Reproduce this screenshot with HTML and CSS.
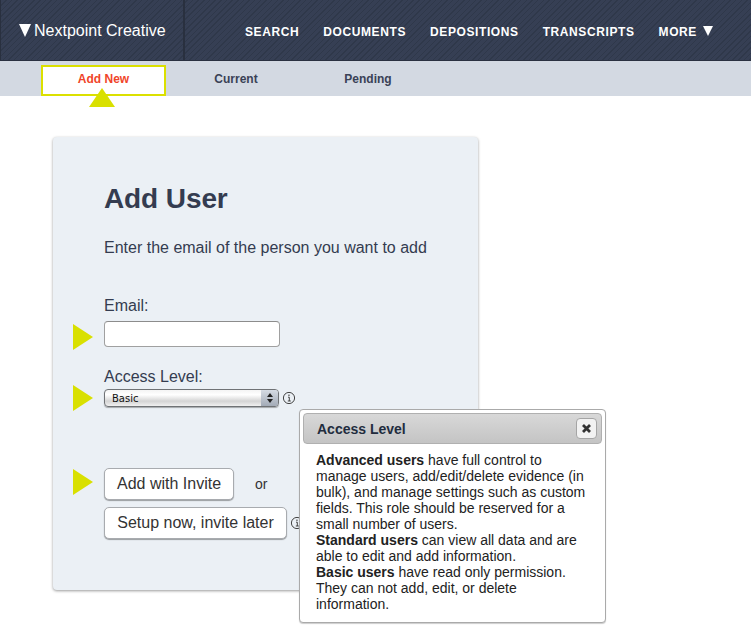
FILE: index.html
```html
<!DOCTYPE html>
<html lang="en">
<head>
<meta charset="utf-8">
<title>Add User</title>
<link rel="stylesheet" href="styles.css">
</head>
<body>
<header class="topbar">
  <div class="brand"><span class="brand-arrow"></span><span>Nextpoint Creative</span></div>
  <nav class="mainnav">
    <a>SEARCH</a><a>DOCUMENTS</a><a>DEPOSITIONS</a><a>TRANSCRIPTS</a><a class="more">MORE <span class="more-arrow"></span></a>
  </nav>
</header>
<div class="subbar">
  <a class="tab tab-active"><span class="tab-label">Add New</span><span class="tab-pointer"></span></a>
  <a class="tab tab-current"><span class="tab-label">Current</span></a>
  <a class="tab tab-pending"><span class="tab-label">Pending</span></a>
</div>
<main class="content">
  <section class="card">
    <h1 class="title">Add User</h1>
    <p class="intro">Enter the email of the person you want to add</p>
    <div class="field field-email">
      <span class="marker"></span>
      <label class="label">Email:</label>
      <div class="input"></div>
    </div>
    <div class="field field-access">
      <span class="marker marker-access"></span>
      <label class="label">Access Level:</label>
      <div class="select-row">
        <div class="select"><span class="select-text">Basic</span>
          <span class="stepper"><svg width="8" height="12" viewBox="0 0 8 12"><path d="M4 1 7 5H1zM4 11 1 7h6z" fill="#222"/></svg></span>
        </div>
        <svg class="info" width="14" height="14" viewBox="0 0 14 14"><circle cx="7" cy="7" r="5.6" fill="none" stroke="#444" stroke-width="1"/><path d="M6 6.2h1.3V10M5.8 10h3" fill="none" stroke="#444"/><rect x="6.3" y="3.6" width="1.3" height="1.3" fill="#444"/></svg>
      </div>
    </div>
    <div class="actions">
      <span class="marker marker-actions"></span>
      <div class="action-row"><button class="btn btn-invite">Add with Invite</button><span class="or">or</span></div>
      <div class="action-row"><button class="btn btn-later">Setup now, invite later</button>
        <svg class="info info-later" width="14" height="14" viewBox="0 0 14 14"><circle cx="7" cy="7" r="5.6" fill="none" stroke="#444" stroke-width="1"/><path d="M6 6.2h1.3V10M5.8 10h3" fill="none" stroke="#444"/><rect x="6.3" y="3.6" width="1.3" height="1.3" fill="#444"/></svg>
      </div>
    </div>
  </section>
  <aside class="popup">
    <div class="popup-head"><span>Access Level</span>
      <span class="close"><svg width="11" height="11" viewBox="0 0 11 11"><path d="M2 2l7 7M9 2 2 9" stroke="#333" stroke-width="2.8"/></svg></span>
    </div>
    <div class="popup-body">
      <b>Advanced users</b> have full control to manage users, add/edit/delete evidence (in bulk), and manage settings such as custom fields. This role should be reserved for a small number of users.<br>
      <b>Standard users</b> can view all data and are able to edit and add information.<br>
      <b>Basic users</b> have read only permission. They can not add, edit, or delete information.
    </div>
  </aside>
</main>
</body>
</html>
```
FILE: styles.css
```css
* { box-sizing: border-box; }
html, body { margin: 0; padding: 0; }
body {
  width: 751px;
  height: 643px;
  overflow: hidden;
  background: #fff;
  font-family: "Liberation Sans", Arial, sans-serif;
  color: #343c50;
}
.topbar {
  height: 61px;
  display: flex;
  background-color: #343d51;
  background-image: repeating-linear-gradient(135deg, #2f384a 0 1px, #363f54 1px 4px);
  border-bottom: 1px solid #2a3140;
}
.brand {
  width: 185px;
  display: flex;
  align-items: center;
  padding: 2px 0 0 18px;
  border-left: 1px solid #29303f;
  border-right: 2px solid #29303f;
  color: #fff;
  font-size: 16px;
  gap: 3px;
}
.brand-arrow {
  width: 0;
  height: 0;
  margin-top: -1px;
  border-left: 6.5px solid transparent;
  border-right: 6.5px solid transparent;
  border-top: 13px solid #fff;
}
.mainnav {
  display: flex;
  align-items: center;
  gap: 24px;
  padding: 4px 0 0 60px;
  color: #fff;
  font-size: 12px;
  font-weight: bold;
  letter-spacing: 0.6px;
}
.more-arrow {
  display: inline-block;
  width: 0;
  height: 0;
  margin-left: 2px;
  border-left: 5px solid transparent;
  border-right: 5px solid transparent;
  border-top: 10px solid #fff;
}
.subbar {
  height: 35px;
  background: #d3d9e2;
  display: flex;
  align-items: flex-start;
  padding: 4px 0 0 41px;
  font-size: 12px;
  font-weight: bold;
}
.tab {
  position: relative;
  height: 31px;
  display: flex;
  align-items: center;
  justify-content: center;
  padding-bottom: 4px;
  color: #3a4256;
}
.tab-active {
  width: 125px;
  background: #fff;
  border: 2px solid #dbe000;
  color: #f0442a;
}
.tab-current { width: 140px; }
.tab-pending { width: 124px; }
.tab-pointer {
  position: absolute;
  left: 46px;
  top: 21px;
  width: 0;
  height: 0;
  border-left: 13.5px solid transparent;
  border-right: 13.5px solid transparent;
  border-bottom: 19px solid #d9e000;
}
.content {
  position: relative;
  padding: 41px 0 0 53px;
}
.card {
  width: 425px;
  height: 453px;
  background: #ebf0f5;
  border-radius: 4px;
  box-shadow: 0 1px 3px rgba(0, 0, 0, 0.4);
  padding: 45px 0 0 51px;
}
.title {
  margin: 0;
  font-size: 28px;
  line-height: 34px;
  font-weight: bold;
  color: #343c50;
  letter-spacing: -0.1px;
}
.intro {
  margin: 22px 0 0;
  font-size: 16px;
  line-height: 20px;
  color: #343c50;
}
.field { position: relative; }
.field-email { margin-top: 38px; }
.field-access { margin-top: 20px; }
.label {
  display: block;
  font-size: 16px;
  line-height: 20px;
  color: #343c50;
}
.input {
  width: 176px;
  height: 26px;
  margin-top: 5px;
  background: #fff;
  border: 1px solid #a0a0a0;
  border-top-color: #8c8c8c;
  border-radius: 4px;
}
.marker {
  position: absolute;
  left: -31px;
  top: 28px;
  width: 0;
  height: 0;
  border-top: 13px solid transparent;
  border-bottom: 13px solid transparent;
  border-left: 20px solid #d9e000;
}
.marker-access { top: 18px; }
.marker-actions { top: 1px; }
.select-row {
  display: flex;
  align-items: center;
  gap: 3px;
  margin-top: 2px;
}
.select {
  width: 175px;
  height: 18px;
  display: flex;
  justify-content: space-between;
  align-items: center;
  border: 1px solid #6f7275;
  border-radius: 4px;
  background: linear-gradient(#f4f4f4, #fff 30%, #d4d4d4 70%, #f0f0f0);
  overflow: hidden;
  box-shadow: 0 1px 1px rgba(0, 0, 0, 0.3);
}
.select-text {
  padding-left: 7px;
  font-family: "DejaVu Sans", sans-serif;
  font-size: 10px;
  color: #111;
}
.stepper {
  width: 17px;
  height: 100%;
  display: flex;
  align-items: center;
  justify-content: center;
  background: linear-gradient(#d5dbe3, #a3abb7);
}
.actions {
  position: relative;
  margin-top: 61px;
  display: flex;
  flex-direction: column;
  gap: 7px;
}
.action-row { display: flex; align-items: center; }
.btn {
  height: 32px;
  padding: 0;
  background: #fff;
  border: 1px solid #a8abaf;
  border-radius: 5px;
  box-shadow: 0 1px 1px rgba(0, 0, 0, 0.35);
  font-family: "Liberation Sans", Arial, sans-serif;
  font-size: 16px;
  color: #333;
}
.btn-invite { width: 130px; }
.btn-later { width: 183px; }
.or { margin-left: 21px; font-size: 14px; color: #333; }
.info-later { margin-left: 3px; }
.popup {
  position: absolute;
  left: 299px;
  top: 313px;
  width: 307px;
  height: 214px;
  background: #fff;
  border: 1px solid #aaa;
  border-radius: 4px;
  box-shadow: 0 1px 1px rgba(0, 0, 0, 0.2);
  padding: 3px;
}
.popup-head {
  height: 31px;
  display: flex;
  justify-content: space-between;
  align-items: center;
  padding: 0 4px 0 13px;
  background: linear-gradient(#d8d8d8, #c4c4c4);
  border: 1px solid #b0b0b0;
  border-radius: 4px;
  font-size: 14px;
  font-weight: bold;
  color: #222c3e;
}
.close {
  width: 21px;
  height: 21px;
  display: flex;
  align-items: center;
  justify-content: center;
  background: #f2f2f2;
  border: 1px solid #a5a5a5;
  border-radius: 4px;
}
.popup-body {
  padding: 8px 12px 0 13px;
  font-size: 14px;
  line-height: 16px;
  color: #222;
}
```
